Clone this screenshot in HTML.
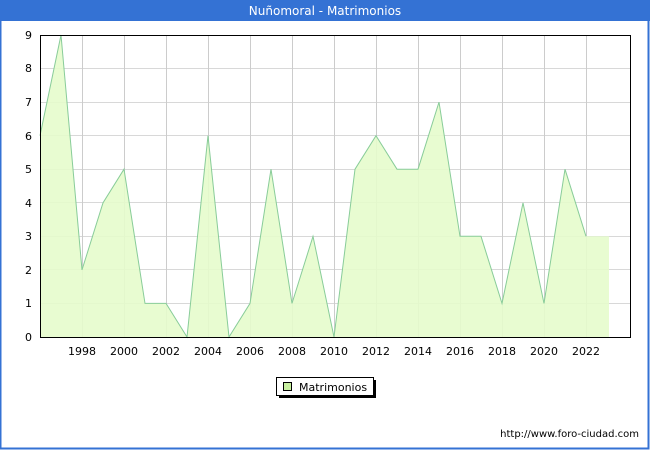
<!DOCTYPE html>
<html><head><meta charset="utf-8"><style>
body{margin:0;width:650px;height:450px;overflow:hidden;background:#fff;font-family:"DejaVu Sans","Liberation Sans",sans-serif}
</style></head><body>
<svg width="650" height="450" xmlns="http://www.w3.org/2000/svg" font-family="DejaVu Sans, Liberation Sans, sans-serif">
<rect x="0" y="0" width="650" height="450" fill="#fff"/>
<rect x="0.5" y="0.5" width="648" height="448" fill="none" stroke="#3472d4" stroke-width="2"/>
<rect x="0" y="0" width="650" height="21" fill="#3472d4"/>
<text x="325" y="15" font-size="12" fill="#fff" text-anchor="middle">Nuñomoral - Matrimonios</text>
<g stroke="#d8d8d8" stroke-width="1">
<line x1="40" y1="303.5" x2="630" y2="303.5"/><line x1="40" y1="269.5" x2="630" y2="269.5"/><line x1="40" y1="236.5" x2="630" y2="236.5"/><line x1="40" y1="202.5" x2="630" y2="202.5"/><line x1="40" y1="169.5" x2="630" y2="169.5"/><line x1="40" y1="135.5" x2="630" y2="135.5"/><line x1="40" y1="102.5" x2="630" y2="102.5"/><line x1="40" y1="68.5" x2="630" y2="68.5"/>
</g>
<g stroke="#cccccc" stroke-width="1">
<line x1="82.5" y1="35" x2="82.5" y2="337"/><line x1="124.5" y1="35" x2="124.5" y2="337"/><line x1="166.5" y1="35" x2="166.5" y2="337"/><line x1="208.5" y1="35" x2="208.5" y2="337"/><line x1="250.5" y1="35" x2="250.5" y2="337"/><line x1="292.5" y1="35" x2="292.5" y2="337"/><line x1="334.5" y1="35" x2="334.5" y2="337"/><line x1="376.5" y1="35" x2="376.5" y2="337"/><line x1="418.5" y1="35" x2="418.5" y2="337"/><line x1="460.5" y1="35" x2="460.5" y2="337"/><line x1="502.5" y1="35" x2="502.5" y2="337"/><line x1="544.5" y1="35" x2="544.5" y2="337"/><line x1="586.5" y1="35" x2="586.5" y2="337"/>
</g>
<polygon fill="#e5fccc" fill-opacity="0.9" points="40,337 40,135.7 61,35 82,269.9 103,202.8 124,169.2 145,303.4 166,303.4 187,337 208,135.7 229,337 250,303.4 271,169.2 292,303.4 313,236.3 334,337 355,169.2 376,135.7 397,169.2 418,169.2 439,102.1 460,236.3 481,236.3 502,303.4 523,202.8 544,303.4 565,169.2 586,236.3 609,236.3 609,337"/>
<polyline fill="none" stroke="#88cc99" stroke-width="1" points="40,135.7 61,35 82,269.9 103,202.8 124,169.2 145,303.4 166,303.4 187,337 208,135.7 229,337 250,303.4 271,169.2 292,303.4 313,236.3 334,337 355,169.2 376,135.7 397,169.2 418,169.2 439,102.1 460,236.3 481,236.3 502,303.4 523,202.8 544,303.4 565,169.2 586,236.3"/>
<rect x="40.5" y="35.5" width="590" height="302" fill="none" stroke="#000" stroke-width="1"/>
<g font-size="11" fill="#000" text-anchor="end">
<text x="32" y="341">0</text><text x="32" y="307">1</text><text x="32" y="274">2</text><text x="32" y="240">3</text><text x="32" y="207">4</text><text x="32" y="173">5</text><text x="32" y="140">6</text><text x="32" y="106">7</text><text x="32" y="72">8</text><text x="32" y="39">9</text>
</g>
<g font-size="11" fill="#000" text-anchor="middle">
<text x="82" y="355">1998</text><text x="124" y="355">2000</text><text x="166" y="355">2002</text><text x="208" y="355">2004</text><text x="250" y="355">2006</text><text x="292" y="355">2008</text><text x="334" y="355">2010</text><text x="376" y="355">2012</text><text x="418" y="355">2014</text><text x="460" y="355">2016</text><text x="502" y="355">2018</text><text x="544" y="355">2020</text><text x="586" y="355">2022</text>
</g>
<rect x="279" y="380" width="97" height="18" fill="#000"/>
<rect x="276.5" y="377.5" width="97" height="18" fill="#fff" stroke="#000"/>
<rect x="283.5" y="382.5" width="8" height="8" fill="#c8f0a0" stroke="#000"/>
<text x="299" y="391" font-size="11" fill="#000">Matrimonios</text>
<text x="639" y="437" font-size="10" fill="#000" text-anchor="end">http://www.foro-ciudad.com</text>
</svg>
</body></html>
